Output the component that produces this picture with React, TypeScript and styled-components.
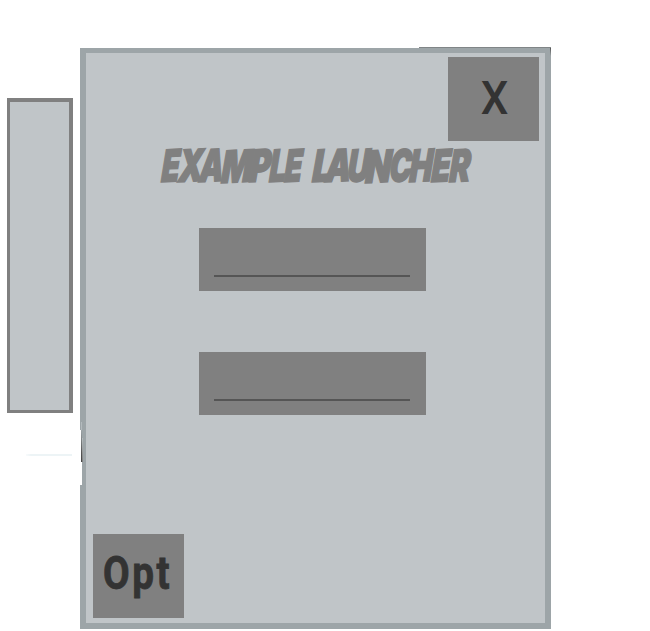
import React from 'react';
import styled, { createGlobalStyle } from 'styled-components';

const GlobalStyle = createGlobalStyle`
  * { box-sizing: border-box; }
  body { margin: 0; background: #fff; overflow: hidden; }
`;

const Page = styled.main`
  position: relative;
  display: flex;
  align-items: flex-start;
  gap: 7px;
  width: 650px;
  height: 631px;
  padding: 48px 0 0 7px;
  background: #fff;
`;

const SidePanel = styled.aside`
  width: 66px;
  height: 315px;
  margin-top: 50px;
  background: #c0c5c8;
  border: solid #808080;
  border-width: 4px 4px 3px 3px;
`;

const Launcher = styled.section`
  display: flex;
  flex-direction: column;
  width: 471px;
  height: 581px;
  background: #c0c5c8;
  border: solid #9da5a8;
  border-width: 5px 6px 6px;
`;

const TopBar = styled.header`
  display: flex;
  justify-content: flex-end;
  padding: 4px 6px 0 0;
`;

const BottomBar = styled.footer`
  display: flex;
  margin-top: auto;
  padding: 0 0 5px 7px;
`;

const SquareButton = styled.button`
  display: flex;
  align-items: center;
  justify-content: center;
  width: 91px;
  height: 84px;
  padding: 0;
  border: 0;
  background: #808080;
  color: #333;
  font: 500 46px/54px Roboto, sans-serif;
`;

const Label = styled.span<{ $stretch: number; $spacing?: number; $weight?: number; $left?: number; $top?: number; $stroke?: number }>`
  display: block;
  flex: none;
  font-weight: ${p => p.$weight ?? 500};
  letter-spacing: ${p => p.$spacing ?? 0}px;
  -webkit-text-stroke: ${p => p.$stroke ?? 0}px #333;
  transform: translate(${p => p.$left ?? 0}px, ${p => p.$top ?? 0}px) scaleX(${p => p.$stretch});
`;

const Title = styled.h1`
  height: 46px;
  margin: 1px 0 0 75px;
  color: #808080;
  font: italic 900 44px/46px Inter, "Liberation Sans", sans-serif;
  white-space: nowrap;
`;

const Word = styled.span<{ $width: number }>`
  display: inline-flex;
  width: ${p => p.$width}px;
  height: 46px;
  vertical-align: top;
`;

const Letter = styled.span<{ $advance: number; $stretch: number; $drop: number }>`
  flex: none;
  width: ${p => p.$advance}px;
  transform: translateY(${p => p.$drop}px) skewY(-3deg) skewX(-3deg) scaleX(${p => p.$stretch});
  transform-origin: left 38px;
  -webkit-text-stroke: 1.6px #808080;
`;

type Glyph = [letter: string, advance: number, stretch: number, drop: number];

const example: Glyph[] = [
  ['E', 17, 0.67, 1],
  ['X', 21, 0.72, 1],
  ['A', 22, 0.69, 1],
  ['M', 28, 0.73, 2],
  ['P', 20, 0.74, 1],
  ['L', 15, 0.67, 1],
  ['E', 19, 0.65, 1],
];

const launcher: Glyph[] = [
  ['L', 13, 0.77, 1],
  ['A', 22, 0.73, 1],
  ['U', 18, 0.7, 1],
  ['N', 24, 0.76, 2],
  ['C', 20, 0.68, 1],
  ['H', 22, 0.7, 1],
  ['E', 18, 0.7, 1],
  ['R', 22, 0.71, 1],
];

function TitleWord({ glyphs, width }: { glyphs: Glyph[]; width: number }) {
  return (
    <Word $width={width}>
      {glyphs.map(([letter, advance, stretch, drop], i) => (
        <Letter key={i} $advance={advance} $stretch={stretch} $drop={drop}>{letter}</Letter>
      ))}
    </Word>
  );
}

const Form = styled.form`
  display: flex;
  flex-direction: column;
  gap: 61px;
  margin: 40px 0 0 113px;
`;

const Field = styled.label`
  display: flex;
  align-items: flex-end;
  width: 227px;
  height: 63px;
  padding: 0 16px 14px 15px;
  background: #808080;
`;

const Input = styled.input`
  width: 100%;
  height: 36px;
  padding: 0;
  border: 0;
  border-bottom: 2px solid #555;
  border-radius: 0;
  outline: 0;
  background: transparent;
  color: #333;
  font: 22px Roboto, sans-serif;
`;

/* Small marks lying over the window's edges. */
const Mark = styled.i<{ $x: number; $y: number; $w: number; $h: number; $fill: string }>`
  position: absolute;
  left: ${p => p.$x}px;
  top: ${p => p.$y}px;
  width: ${p => p.$w}px;
  height: ${p => p.$h}px;
  background: ${p => p.$fill};
`;

export default function App() {
  return (
    <>
      <GlobalStyle />
      <Page>
        <SidePanel />
        <Launcher>
          <TopBar>
            <SquareButton type="button">
              <Label $stretch={0.95} $left={1} $top={-1}>X</Label>
            </SquareButton>
          </TopBar>
          <Title>
            <TitleWord glyphs={example} width={142} />{' '}
            <TitleWord glyphs={launcher} width={161} />
          </Title>
          <Form>
            <Field><Input aria-label="First field" /></Field>
            <Field><Input aria-label="Second field" /></Field>
          </Form>
          <BottomBar>
            <SquareButton type="button">
              <Label $stretch={0.84} $spacing={3} $weight={700} $left={-0.5} $top={-3} $stroke={0.8}>Opt</Label>
            </SquareButton>
          </BottomBar>
        </Launcher>
        <Mark $x={419} $y={47} $w={132} $h={1} $fill="#808587" />
        <Mark $x={550} $y={48} $w={1} $h={8} $fill="linear-gradient(#555, #9da5a8)" />
        <Mark $x={80} $y={430} $w={2} $h={55} $fill="#fff" />
        <Mark $x={81} $y={422} $w={1} $h={8} $fill="#b3babd" />
        <Mark $x={81} $y={430} $w={1} $h={32} $fill="linear-gradient(#9da5a8, #555 70%, #444)" />
        <Mark $x={82} $y={438} $w={1} $h={24} $fill="linear-gradient(#b3babd, #808080)" />
        <Mark $x={26} $y={454} $w={46} $h={2} $fill="linear-gradient(90deg, #f8fbfc, #edf4f6 5px)" />
      </Page>
    </>
  );
}
